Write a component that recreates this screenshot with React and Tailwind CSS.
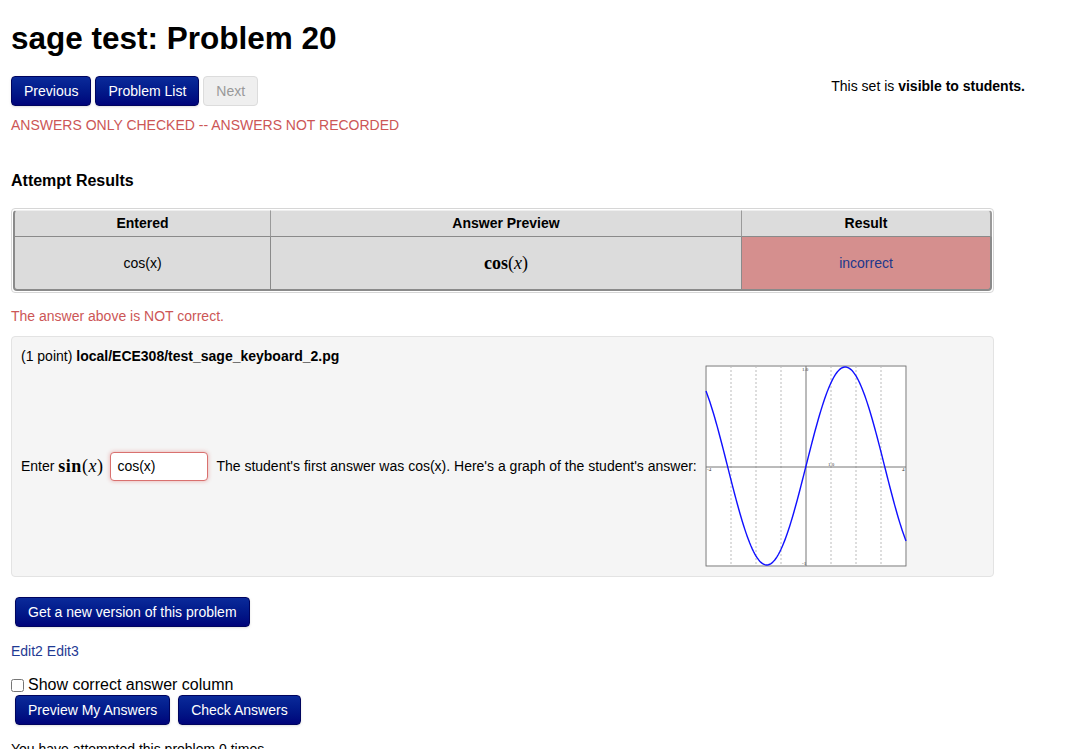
import React from 'react';

// sin(x) for x in [-4, 4], drawn in a 200x200 box (25px per unit, 100px per unit vertically)
const curve = Array.from({ length: 161 }, (_, i) => {
  const x = -4 + i * 0.05;
  const px = 100 + x * 25;
  const py = 100 - Math.sin(x) * 99;
  return `${i === 0 ? 'M' : 'L'}${px.toFixed(2)},${py.toFixed(2)}`;
}).join(' ');

const font = { fontFamily: '"Liberation Sans", Arial, sans-serif' };

function NavyButton({ children, className = '' }) {
  return (
    <button className={`h-[30px] px-[12px] rounded-[4px] border border-[#00045e] bg-gradient-to-b from-[#0b2a9a] to-[#00037a] text-white text-[14px] leading-none shadow-sm ${className}`}>
      {children}
    </button>
  );
}

function MathX() {
  return <span className="italic" style={{ fontFamily: '"Liberation Serif", "DejaVu Serif", serif' }}>x</span>;
}

function Graph() {
  const grid = [-3, -2, -1, 1, 2, 3];
  return (
    <svg width="202" height="202" viewBox="-1 -1 202 202" className="inline-block align-middle bg-white ml-[4px]">
      <rect x="0" y="0" width="200" height="200" fill="white" stroke="#777" strokeWidth="1" />
      {grid.map(g => (
        <line key={g} x1={100 + g * 25} y1="0" x2={100 + g * 25} y2="200" stroke="#bbb" strokeWidth="1" strokeDasharray="2 2" />
      ))}
      <line x1="100" y1="0" x2="100" y2="200" stroke="#777" strokeWidth="1" />
      <line x1="0" y1="101" x2="200" y2="101" stroke="#777" strokeWidth="1" />
      <path d={curve} fill="none" stroke="#1010ff" strokeWidth="1.4" />
      <text x="96" y="5" fontSize="5" fill="#333" fontFamily="Liberation Serif">1.0</text>
      <text x="96" y="199" fontSize="5" fill="#333" fontFamily="Liberation Serif">-1</text>
      <text x="1" y="105" fontSize="5" fill="#333" fontFamily="Liberation Serif">-4</text>
      <text x="196" y="105" fontSize="5" fill="#333" fontFamily="Liberation Serif">4</text>
      <text x="122" y="100" fontSize="5" fill="#333" fontFamily="Liberation Serif">1.0</text>
    </svg>
  );
}

export default function App() {
  return (
    <div className="min-h-[749px] bg-white text-[14px] text-black pl-[11px]" style={font}>
      <h1 className="pt-[19px] text-[31.5px] leading-[38px] font-bold">sage test: Problem 20</h1>

      <div className="mt-[19px] flex w-[1014px] justify-between">
        <div className="flex gap-[4px]">
          <NavyButton>Previous</NavyButton>
          <NavyButton>Problem List</NavyButton>
          <button className="h-[30px] px-[12px] rounded-[4px] border border-[#dcdcdc] bg-[#efefef] text-[#999] text-[14px] leading-none">Next</button>
        </div>
        <div className="pt-[1px] leading-[18px]">This set is <b>visible to students.</b></div>
      </div>

      <p className="mt-[9px] leading-[20px] text-[#cc5656]">ANSWERS ONLY CHECKED -- ANSWERS NOT RECORDED</p>

      <h2 className="mt-[36px] text-[16px] leading-[20px] font-bold">Attempt Results</h2>

      <div className="mt-[17px] w-[983px] rounded-[4px] border border-[#d6d6d6] p-px">
        <table className="w-full border-separate border-spacing-0 text-center">
          <thead>
            <tr className="h-[27px] bg-[#dcdcdc] font-bold">
              <th className="w-[258px] border-l-2 border-t border-b border-r border-l-[#8a8a8a] border-t-[#eee] border-b-[#8a8a8a] border-r-[#9a9a9a] rounded-tl-[4px]">Entered</th>
              <th className="w-[471px] border-t border-b border-r border-t-[#eee] border-b-[#8a8a8a] border-r-[#9a9a9a]">Answer Preview</th>
              <th className="border-t border-b border-r-2 border-t-[#eee] border-b-[#8a8a8a] border-r-[#9a9a9a] rounded-tr-[4px]">Result</th>
            </tr>
          </thead>
          <tbody>
            <tr className="h-[54px]">
              <td className="bg-[#dcdcdc] border-l-2 border-b-2 border-r border-[#8a8a8a] rounded-bl-[4px]">cos(x)</td>
              <td className="bg-[#dcdcdc] border-b-2 border-r border-[#8a8a8a] text-[18px]" style={{ fontFamily: '"Liberation Serif", serif' }}>
                <span className="font-bold">cos</span>(<MathX />)
              </td>
              <td className="bg-[#d58f8e] border-b-2 border-r-2 border-[#8a8a8a] rounded-br-[4px] text-[#20378c]">incorrect</td>
            </tr>
          </tbody>
        </table>
      </div>

      <p className="mt-[13px] leading-[20px] text-[#cc5656]">The answer above is NOT correct.</p>

      <div className="mt-[10px] w-[983px] h-[241px] rounded-[4px] border border-[#e3e3e3] bg-[#f5f5f5] pl-[9px] pt-[10px]">
        <p className="leading-[18px]">(1 point) <b>local/ECE308/test_sage_keyboard_2.pg</b></p>
        <div className="leading-[18px]">
          <span className="align-middle">Enter </span>
          <span className="align-middle text-[18px] tracking-[0.5px]" style={{ fontFamily: '"Liberation Serif", serif' }}>
            <span className="font-bold">sin</span>(<MathX />)
          </span>
          <input
            readOnly
            value="cos(x)"
            className="align-middle ml-[7px] mr-[8px] w-[98px] h-[29px] rounded-[4px] border border-[#d9716f] bg-white px-[6px] text-[14px] shadow-[0_0_4px_rgba(217,83,79,0.45)] outline-none"
            style={font}
          />
          <span className="align-middle">The student's first answer was cos(x). Here's a graph of the student's answer: </span>
          <Graph />
        </div>
      </div>

      <NavyButton className="mt-[20px] ml-[4px]">Get a new version of this problem</NavyButton>

      <p className="mt-[14px] leading-[20px] text-[#1f3a93]">
        <span>Edit2</span> <span>Edit3</span>
      </p>

      <div className="mt-[15px] flex items-center leading-[18px] text-[16px]">
        <input type="checkbox" className="w-[13px] h-[13px] mr-[4px] accent-[#555]" />
        <span>Show correct answer column</span>
      </div>
      <div className="mt-[1px] ml-[4px] flex gap-[8px]">
        <NavyButton>Preview My Answers</NavyButton>
        <NavyButton>Check Answers</NavyButton>
      </div>

      <p className="mt-[14px] leading-[20px]">You have attempted this problem 0 times.</p>
    </div>
  );
}
